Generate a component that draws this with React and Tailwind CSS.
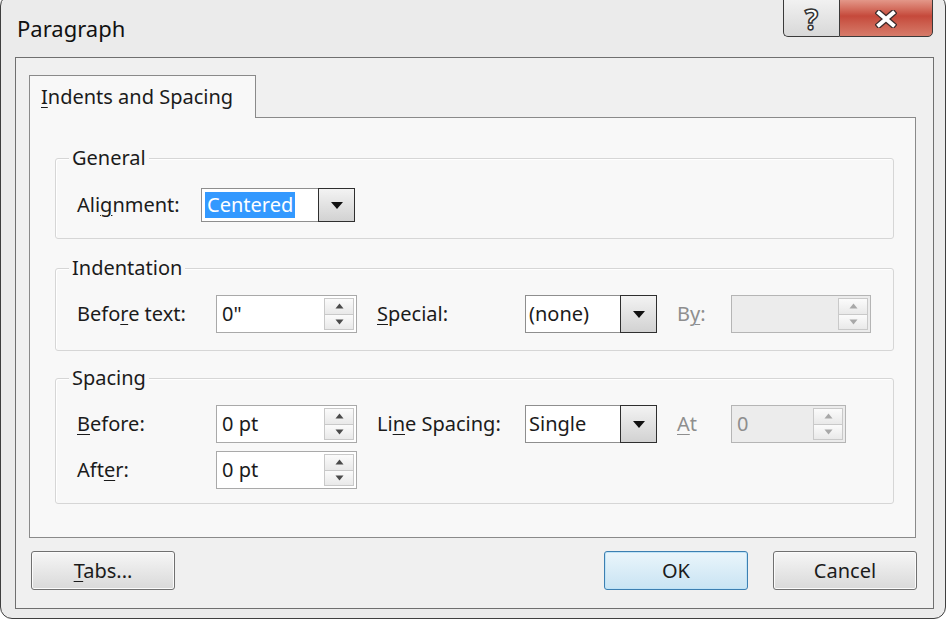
import React from 'react';

// access-key underline helper
function U({ children }) {
    return <span className="underline underline-offset-[3px] decoration-1">{children}</span>;
}

function Arrow({ dir, disabled }) {
    const c = disabled ? '#a8a8a8' : '#4a4a4a';
    return (
        <svg width="9" height="6" viewBox="0 0 9 6">
            {dir === 'up'
                ? <path d="M4.5 0.5 L8.5 5.5 L0.5 5.5 Z" fill={c} />
                : <path d="M0.5 0.5 L8.5 0.5 L4.5 5.5 Z" fill={c} />}
        </svg>
    );
}

function SpinBox({ value, width, disabled }) {
    return (
        <div
            className={`flex h-[38px] items-stretch border p-[2px] ${width} ${
                disabled ? 'border-[#b5b5b5] bg-[#ececec] text-[#8e8e8e]' : 'border-[#a9a9a9] bg-white text-[#1b1b1b]'
            }`}
        >
            <div className="flex flex-1 items-center pl-[3px] leading-none">{value}</div>
            <div className="flex w-[30px] flex-col">
                <div className="flex flex-1 items-center justify-center border border-[#c9c9c9] bg-gradient-to-b from-[#fbfbfb] to-[#e9e9e9]">
                    <Arrow dir="up" disabled={disabled} />
                </div>
                <div className="flex flex-1 items-center justify-center border border-t-0 border-[#c9c9c9] bg-gradient-to-b from-[#fbfbfb] to-[#e9e9e9]">
                    <Arrow dir="down" disabled={disabled} />
                </div>
            </div>
        </div>
    );
}

function Dropdown({ children, textWidth, height = 'h-[38px]' }) {
    return (
        <div className={`flex ${height}`}>
            <div className={`flex items-center border border-r-0 border-[#8e8e8e] bg-white px-[3px] ${textWidth}`}>
                {children}
            </div>
            <div className="flex w-[37px] items-center justify-center border border-[#2f2f2f] bg-gradient-to-b from-[#f3f3f3] to-[#d2d2d2]">
                <svg width="12" height="7" viewBox="0 0 12 7">
                    <path d="M0 0 L12 0 L6 7 Z" fill="#111" />
                </svg>
            </div>
        </div>
    );
}

function Group({ title, children, className }) {
    return (
        <div className={`rounded-[3px] border border-[#d6d6d6] px-[21px] shadow-[inset_1px_1px_0_#ffffff] ${className}`}>
            <div className="-mt-[13px] -ml-[8px] w-fit bg-[#f8f8f8] px-[3px] leading-[24px] text-[#1b1b1b]">
                {title}
            </div>
            {children}
        </div>
    );
}

function Button({ children, primary }) {
    return (
        <button
            className={`flex h-[39px] w-[144px] items-center justify-center rounded-[3px] border text-[#1b1b1b] ${
                primary
                    ? 'border-[#3c7fb1] bg-gradient-to-b from-[#eaf5fb] to-[#c9e4f3] shadow-[inset_0_0_0_1px_#bfe3f7]'
                    : 'border-[#707070] bg-gradient-to-b from-[#f6f6f6] to-[#d9d9d9] shadow-[inset_0_0_0_1px_#fbfbfb]'
            }`}
        >
            {children}
        </button>
    );
}

export default function App() {
    return (
        <div className="h-[622px] w-[948px] overflow-hidden bg-white font-['Noto_Sans',sans-serif] text-[20px]">
            <div className="-mt-[6px] flex h-[625px] w-[946px] flex-col rounded-[12px] border border-[#3f3f3f] bg-[#ebebeb]">
                {/* title bar */}
                <div className="flex h-[62px] items-start justify-between">
                    <div className="pl-[16px] pt-[19px] text-[22px] leading-[28px] text-[#111]">Paragraph</div>
                    <div className="mr-[12px] flex h-[42px]">
                        <div className="flex w-[56px] items-center justify-center rounded-bl-[5px] border border-r-0 border-[#3a3a3a] bg-gradient-to-b from-[#f4f4f4] to-[#d8d8d8] pt-[5px]">
                            <span className="text-[28px] font-bold leading-none text-white [-webkit-text-stroke:1.5px_#333]">?</span>
                        </div>
                        <div className="flex w-[94px] items-center justify-center rounded-br-[5px] border border-[#3a3a3a] bg-gradient-to-b from-[#e9a99c] via-[#c5493b] to-[#d67b6a] pt-[5px]">
                            <svg width="22" height="18" viewBox="0 0 22 18">
                                <path d="M4 3 L18 15 M18 3 L4 15" stroke="#3b2a2a" strokeWidth="6.5" strokeLinecap="square" />
                                <path d="M4 3 L18 15 M18 3 L4 15" stroke="#ffffff" strokeWidth="4" strokeLinecap="square" />
                            </svg>
                        </div>
                    </div>
                </div>

                {/* client area */}
                <div className="ml-[14px] flex h-[552px] w-[919px] flex-col border border-[#6f6f6f] bg-[#f0f0f0]">
                    <div className="ml-[13px] mt-[17px] flex w-[887px] flex-col">
                        <div className="relative z-10 -mb-px flex h-[43px] w-[227px] items-center border border-b-0 border-[#8a8a8a] bg-[#f8f8f8] pl-[11px] text-[#1b1b1b]">
                            <span><U>I</U>ndents and Spacing</span>
                        </div>
                        <div className="flex h-[421px] flex-col border border-[#8a8a8a] bg-[#f8f8f8] pl-[25px] pr-[21px] pt-[40px] text-[#1b1b1b]">
                            <Group title="General" className="pb-[16px]">
                                <div className="mt-[18px] flex items-center">
                                    <div className="w-[124px]">Ali<U>g</U>nment:</div>
                                    <Dropdown textWidth="w-[117px]" height="h-[34px]">
                                        <span className="bg-[#3399ff] px-[2px] leading-[26px] text-white">Centered</span>
                                    </Dropdown>
                                </div>
                            </Group>

                            <Group title="Indentation" className="mt-[29px] pb-[17px]">
                                <div className="mt-[15px] flex items-center">
                                    <div className="w-[139px]">Befo<U>r</U>e text:</div>
                                    <SpinBox value={'0"'} width="w-[141px]" />
                                    <div className="ml-[20px] w-[148px]"><U>S</U>pecial:</div>
                                    <Dropdown textWidth="w-[95px]">(none)</Dropdown>
                                    <div className="ml-[20px] w-[54px] text-[#8e8e8e]">B<U>y</U>:</div>
                                    <SpinBox value="" width="w-[140px]" disabled />
                                </div>
                            </Group>

                            <Group title="Spacing" className="mt-[27px] pb-[14px]">
                                <div className="mt-[15px] flex items-center">
                                    <div className="w-[139px]"><U>B</U>efore:</div>
                                    <SpinBox value="0 pt" width="w-[141px]" />
                                    <div className="ml-[20px] w-[148px]">Li<U>n</U>e Spacing:</div>
                                    <Dropdown textWidth="w-[95px]">Single</Dropdown>
                                    <div className="ml-[20px] w-[54px] text-[#8e8e8e]"><U>A</U>t</div>
                                    <SpinBox value="0" width="w-[115px]" disabled />
                                </div>
                                <div className="mt-[8px] flex items-center">
                                    <div className="w-[139px]">Aft<U>e</U>r:</div>
                                    <SpinBox value="0 pt" width="w-[141px]" />
                                </div>
                            </Group>
                        </div>
                    </div>

                    <div className="mt-[13px] flex items-center pl-[15px] pr-[16px]">
                        <Button><span><U>T</U>abs...</span></Button>
                        <div className="flex-1" />
                        <Button primary>OK</Button>
                        <div className="w-[25px]" />
                        <Button>Cancel</Button>
                    </div>
                </div>
            </div>
        </div>
    );
}
